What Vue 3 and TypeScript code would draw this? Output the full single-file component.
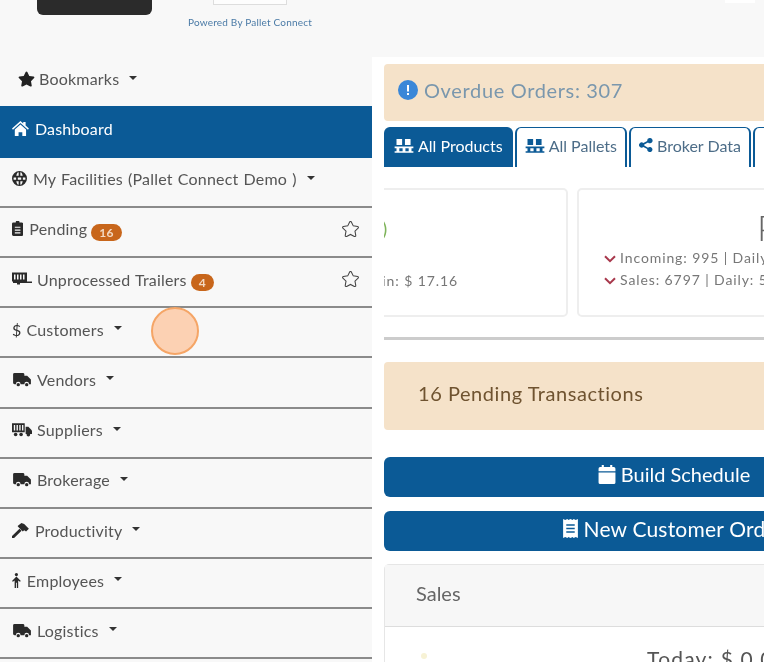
<template>
  <div class="page">
    <header class="top">
      <div class="store-badge"></div>
      <div class="powered">
        <div class="logo-box"></div>
        <span>Powered By Pallet Connect</span>
      </div>
      <div class="top-mark"></div>
    </header>

    <div class="body">
      <nav class="sidebar">
        <div class="bookmarks">
          <svg class="ico" viewBox="0 0 576 512"><path :d="starPath" /></svg>
          <span>Bookmarks</span>
          <i class="caret"></i>
        </div>
        <a
          v-for="row in rows"
          :key="row.label"
          :class="['nav-row', { active: row.active }]"
        >
          <svg
            v-if="row.icon"
            :class="['ico', `ico-${row.icon}`]"
            :viewBox="icons[row.icon].box"
            v-html="icons[row.icon].body"
          ></svg>
          <span v-else class="dollar">$</span>
          <span>{{ row.label }}</span>
          <b v-if="row.badge" class="badge">{{ row.badge }}</b>
          <i v-if="row.caret" class="caret"></i>
          <svg v-if="row.fav" class="fav" viewBox="0 0 576 512"><path :d="starPath" /></svg>
        </a>
        <div class="pin"></div>
      </nav>

      <main class="main">
        <div class="alert overdue">
          <svg class="info" viewBox="0 0 20 20">
            <circle cx="10" cy="10" r="10" fill="#3a87d8" />
            <rect x="9" y="5" width="2" height="6.500" fill="#fff" />
            <rect x="9" y="13" width="2" height="2" fill="#fff" />
          </svg>
          Overdue Orders: 307
        </div>

        <div class="tabs">
          <div v-for="tab in tabs" :key="tab.label" :class="['tab', { current: tab.current }]">
            <svg class="tab-ico" :viewBox="tab.share ? '0 0 16 16' : '0 0 20 16'" v-html="tab.share ? shareIcon : palletIcon"></svg>
            {{ tab.label }}
          </div>
        </div>

        <div class="stats">
          <section class="stat first">
            <span class="paren">)</span>
            <p>Margin: $ 17.16</p>
          </section>
          <section class="stat second">
            <h2>Pallets</h2>
            <p v-for="line in statLines" :key="line">
              <svg class="down" viewBox="0 0 12 8"><path d="M1 1.200l5 5 5-5" /></svg>{{ line }}
            </p>
          </section>
        </div>

        <hr class="rule" />

        <div class="alert pending">16 Pending Transactions</div>

        <button class="wide first-btn">
          <svg class="btn-ico" viewBox="0 0 16 18">
            <path fill="#fff" d="M3 0h2v2h6V0h2v2h1.500A1.500 1.500 0 0 1 16 3.500V6H0V3.500A1.500 1.500 0 0 1 1.500 2H3zM0 7h16v9.500a1.500 1.500 0 0 1-1.500 1.500h-13A1.500 1.500 0 0 1 0 16.500z" />
          </svg>
          Build Schedule
        </button>
        <button class="wide order-btn">
          <svg class="btn-ico receipt" viewBox="0 0 14 18">
            <path fill="#fff" fill-rule="evenodd" d="M0 0l2 1 2-1 1 1 2-1 2 1 1-1 2 1 2-1v18l-2-1-2 1-1-1-2 1-2-1-1 1-2-1-2 1zM3 5v1.500h8V5zM3 8.200v1.500h8V8.200zM3 11.500V13h8v-1.500z" />
          </svg>
          New Customer Order
        </button>

        <section class="sales">
          <div class="sales-head">Sales</div>
          <div class="sales-body">
            <span class="dot"></span>
            <span class="today">Today: $ 0.00</span>
          </div>
        </section>
      </main>
    </div>
  </div>
</template>

<script setup lang="ts">
type IconDef = { box: string; body: string }
type Row = {
  label: string
  icon?: string
  active?: boolean
  caret?: boolean
  badge?: string
  fav?: boolean
}

const starPath =
  'M259.3 17.800L194 150.200 47.900 171.500c-26.200 3.800-36.700 36.100-17.700 54.600l105.700 103-25 145.500c-4.500 26.300 23.200 46 46.400 33.700L288 439.600l130.700 68.700c23.200 12.200 50.900-7.400 46.400-33.700l-25-145.500 105.700-103c19-18.500 8.500-50.800-17.700-54.600L382 150.200 316.700 17.800c-11.700-23.600-45.600-23.900-57.400 0z'

const truck =
  '<path d="M0 2.500A1.500 1.500 0 0 1 1.500 1h9A1.500 1.500 0 0 1 12 2.500V4h3l4 4v5h-2a2.500 2.500 0 0 0-5 0H8a2.500 2.500 0 0 0-5 0H1.500A1.500 1.500 0 0 1 0 11.500z"/><circle cx="5.500" cy="13.500" r="1.800"/><circle cx="14.500" cy="13.500" r="1.800"/>'

const icons: Record<string, IconDef> = {
  home: {
    box: '0 0 18 16',
    body: '<path d="M9 0l3 2.600V1h2.500v3.800L18 8l-1 1.200-8-7-8 7L0 8z"/><path d="M3 9L9 3.800 15 9v7h-4v-4H7v4H3z"/>',
  },
  globe: {
    box: '0 0 16 16',
    body: '<path fill-rule="evenodd" d="M8 0a8 8 0 1 1 0 16A8 8 0 0 1 8 0zM6 1.500C5.200 2.600 4.800 3.800 4.600 5h2.500V1.300zM8.900 1.300V5h2.500c-.2-1.200-.6-2.400-1.400-3.500zM1.800 6.800a6 6 0 0 0 0 2.400h2.600V6.800zM6.200 6.800v2.400h3.600V6.800zM11.600 6.800v2.400h2.600a6 6 0 0 0 0-2.400zM4.600 11c.2 1.200.6 2.400 1.400 3.500l1.100.2V11zM8.900 11v3.700l1.100-.2c.8-1.100 1.200-2.300 1.400-3.500z"/>',
  },
  clip: {
    box: '0 0 12 16',
    body: '<path fill-rule="evenodd" d="M4 1.500a2 2 0 0 1 4 0h2.500A1.500 1.500 0 0 1 12 3v11.500a1.500 1.500 0 0 1-1.500 1.500h-9A1.500 1.500 0 0 1 0 14.500V3a1.500 1.500 0 0 1 1.500-1.500zM3 6v1.300h6V6zM3 9v1.300h6V9zM3 12v1.300h6V12z"/>',
  },
  trailer: {
    box: '0 0 20 14',
    body: '<path fill-rule="evenodd" d="M0 0h15v9h5v1.500H8V12H5v-1.500H1V9H0zM2 2v5h1.500V2zM5 2v5h1.500V2zM8 2v5h1.500V2zM11 2v5h1.500V2z"/>',
  },
  truck: { box: '0 0 19 16', body: truck },
  supplier: {
    box: '0 0 22 16',
    body: '<path fill-rule="evenodd" d="M0 1h14v10H0zM2 3v6h1.500V3zM5 3v6h1.500V3zM8 3v6h1.500V3zM11 3v6h1.500V3z"/><path d="M15 5h3l4 4v4h-7z"/><circle cx="4" cy="13.500" r="2"/><circle cx="10" cy="13.500" r="2"/><circle cx="18" cy="13.800" r="2"/>',
  },
  hammer: {
    box: '0 0 18 16',
    body: '<path d="M0 13.800L8 6l2.200 2.200-8 7.800a1.500 1.500 0 0 1-2.200-2.200z"/><path d="M6 3.300L10 0l3 1 5 5-3 3-2-1.300-1.500 1.300L6.500 4z"/>',
  },
  male: {
    box: '0 0 10 17',
    body: '<circle cx="5" cy="1.800" r="1.800"/><path d="M0 9l5-5 5 5-1 1-2-1.500V17H5.500v-6h-1v6H3V8.500L1 10z"/>',
  },
}

const rows: Row[] = [
  { label: 'Dashboard', icon: 'home', active: true },
  { label: 'My Facilities (Pallet Connect Demo )', icon: 'globe', caret: true },
  { label: 'Pending', icon: 'clip', badge: '16', fav: true },
  { label: 'Unprocessed Trailers', icon: 'trailer', badge: '4', fav: true },
  { label: 'Customers', caret: true },
  { label: 'Vendors', icon: 'truck', caret: true },
  { label: 'Suppliers', icon: 'supplier', caret: true },
  { label: 'Brokerage', icon: 'truck', caret: true },
  { label: 'Productivity', icon: 'hammer', caret: true },
  { label: 'Employees', icon: 'male', caret: true },
  { label: 'Logistics', icon: 'truck', caret: true },
]

const palletIcon =
  '<path d="M2 1h6v6.500H2zM11 1h6v6.500h-6zM0 9h20v1.800H0zM0 14h20v1.800H0zM2 11h3v3H2zM8.500 11h3v3h-3zM15 11h3v3h-3z" fill="currentColor"/>'
const shareIcon =
  '<path d="M12.500 0a3 3 0 1 1-2.200 5L6 7.300v1.400L10.300 11a3 3 0 1 1-.9 1.700L5 10.300a3 3 0 1 1 0-4.600l4.400-2.400A3 3 0 0 1 12.500 0z" fill="currentColor"/>'

const tabs = [
  { label: 'All Products', current: true, share: false },
  { label: 'All Pallets', current: false, share: false },
  { label: 'Broker Data', current: false, share: true },
  { label: 'Settings', current: false, share: true },
]

const statLines = ['Incoming: 995 | Daily: 14', 'Sales: 6797 | Daily: 58']
</script>

<style>
html,
body {
  margin: 0;
  background: #fff;
}
</style>

<style scoped>
.page {
  position: relative;
  width: 764px;
  height: 662px;
  overflow: hidden;
  background: #f8f8f8;
  font-family: Lato, 'Liberation Sans', sans-serif;
  color: #555;
  filter: blur(0.35px);
}

.top {
  display: flex;
  height: 57px;
  padding-left: 37px;
  padding-right: 9px;
  gap: 36px;
  box-sizing: border-box;
}

.store-badge {
  flex: none;
  width: 115px;
  height: 15px;
  background: #2b2b2b;
  border-radius: 0 0 6px 6px;
}

.powered {
  flex: none;
  display: flex;
  flex-direction: column;
  align-items: center;
  width: 124px;
  font-size: 10px;
  letter-spacing: 0.2px;
  white-space: nowrap;
  color: #4a7aa6;
}

.logo-box {
  width: 72px;
  height: 4px;
  background: #fdfdfd;
  border: 1px solid #ddd;
  border-top: 0;
  margin-bottom: 11px;
}

.top-mark {
  margin-left: auto;
  width: 30px;
  height: 3px;
  background: #fff;
  flex: none;
}

.body {
  display: flex;
}

.sidebar {
  flex: none;
  width: 372px;
  position: relative;
}

.bookmarks {
  height: 49px;
  box-sizing: border-box;
  display: flex;
  align-items: center;
  padding: 0 0 6px 18px;
  gap: 4px;
  font-size: 16px;
  letter-spacing: 0.2px;
}

.bookmarks .ico {
  width: 17px;
  height: 16px;
  fill: #222;
}

.nav-row {
  height: 50.200px;
  box-sizing: border-box;
  display: flex;
  align-items: center;
  padding: 0 0 6px 12px;
  gap: 6px;
  font-size: 16px;
  letter-spacing: 0.2px;
  word-spacing: 0.8px;
  color: #555;
  border-bottom: 2px solid #8b8b8b;
}

.nav-row.active {
  height: 51.600px;
  background: #0b5a96;
  color: #fff;
  border-bottom: 0;
}

.ico {
  flex: none;
  height: 15px;
  width: auto;
  fill: #2a2a2a;
}

.ico-truck,
.ico-trailer,
.ico-supplier {
  width: 20px;
  margin-right: -1px;
}

.active .ico {
  fill: #fff;
}

.dollar {
  color: #333;
  margin-right: -1px;
}

.badge {
  background: #c8661b;
  color: #f3d9c2;
  font-size: 12px;
  font-weight: 700;
  padding: 1px 8px;
  border-radius: 10px;
  line-height: 15px;
  margin-left: -2px;
  margin-top: 7px;
}

.caret {
  width: 0;
  height: 0;
  margin-left: 4px;
  margin-top: -2px;
  border-left: 4.500px solid transparent;
  border-right: 4.500px solid transparent;
  border-top: 4.500px solid #333;
}

.bookmarks .caret {
  margin-left: 6px;
}

.fav {
  margin-left: auto;
  margin-right: 13px;
  width: 17px;
  height: 16px;
  fill: none;
  stroke: #444;
  stroke-width: 36;
}

.pin {
  position: absolute;
  left: 151px;
  top: 250px;
  width: 44px;
  height: 44px;
  border-radius: 50%;
  background: rgba(255, 170, 110, 0.5);
  border: 2px solid #f5a566;
}

.main {
  flex: none;
  width: 580px;
  padding: 7px 12px 0;
  background: #fff;
  min-height: 620px;
}

.alert {
  background: #f5e2c9;
  border-radius: 4px;
  display: flex;
  align-items: center;
  box-sizing: border-box;
}

.overdue {
  height: 57px;
  padding: 0 0 6px 14px;
  font-size: 20px;
  letter-spacing: 0.65px;
  color: #7a97ad;
}

.info {
  width: 20px;
  height: 20px;
  margin-right: 6px;
}

.tabs {
  display: flex;
  gap: 2px;
  margin-top: 6px;
  height: 40px;
}

.tab {
  display: flex;
  align-items: center;
  gap: 4px;
  padding: 0 8px 5px;
  font-size: 16px;
  color: #4d6d88;
  background: #fff;
  border: 2px solid #0b5a96;
  border-top-width: 1px;
  border-bottom: 0;
  border-radius: 6px 6px 0 0;
  box-sizing: border-box;
  white-space: nowrap;
}

.tab.current {
  background: #0b5a96;
  color: #fff;
}

.tab-ico {
  height: 15px;
  width: 20px;
  color: #0b5a96;
}

.current .tab-ico {
  color: #fff;
}

.tab:nth-child(3) .tab-ico {
  width: 14px;
  height: 14px;
}

.stats {
  display: flex;
  gap: 9px;
  margin-top: 21px;
  overflow: hidden;
}

.stat {
  flex: none;
  height: 129px;
  box-sizing: border-box;
  background: #fff;
  border: 2px solid #eee;
  border-radius: 5px;
  position: relative;
}

.first {
  width: 300px;
  margin-left: -116px;
}

.first p {
  position: absolute;
  right: 108px;
  top: 80px;
  letter-spacing: 0.8px;
}

.paren {
  position: absolute;
  left: 112px;
  top: 26px;
  color: #7fb45b;
  font-size: 20px;
}

.second {
  width: 360px;
  padding: 17px 0 0 25px;
}

.second h2 {
  margin: 0;
  padding-left: 153px;
  font-size: 36px;
  line-height: 40px;
  font-weight: 300;
  color: #666;
}

.stat p {
  margin: 0;
  font-size: 14px;
  line-height: 22px;
  letter-spacing: 0.9px;
  color: #777;
  white-space: nowrap;
}

.down {
  width: 12px;
  height: 8px;
  margin-right: 4px;
  fill: none;
  stroke: #a8384c;
  stroke-width: 2;
}

.rule {
  border: 0;
  height: 3px;
  background: #ccc;
  margin: 20px 0 0;
}

.pending {
  height: 68px;
  margin-top: 22px;
  padding: 0 0 6px 34px;
  font-size: 20px;
  letter-spacing: 0.55px;
  color: #6f5330;
}

.wide {
  display: flex;
  justify-content: center;
  align-items: center;
  gap: 5px;
  width: 100%;
  height: 40px;
  margin-top: 14px;
  padding: 0 0 6px;
  background: #0b5a96;
  color: #fff;
  border: 0;
  border-radius: 6px;
  font-family: inherit;
  font-size: 20px;
}

.first-btn {
  margin-top: 27px;
}

.order-btn {
  font-size: 21px;
  letter-spacing: 0.2px;
}

.btn-ico {
  width: 18px;
  height: 19px;
}

.receipt {
  width: 15px;
}

.sales {
  margin-top: 13px;
  border: 1px solid #e6e6e6;
  border-radius: 5px;
}

.sales-head {
  height: 62px;
  box-sizing: border-box;
  display: flex;
  align-items: center;
  padding: 0 0 5px 31px;
  background: #f7f7f7;
  border-bottom: 1px solid #ddd;
  font-size: 20px;
  color: #666;
}

.sales-body {
  position: relative;
  text-align: center;
  padding: 19px 0 0 86px;
  font-size: 21px;
  letter-spacing: 1.200px;
}

.dot {
  position: absolute;
  left: 36px;
  top: 26px;
  width: 6px;
  height: 6px;
  border-radius: 50%;
  background: #f7f2d5;
}
</style>
